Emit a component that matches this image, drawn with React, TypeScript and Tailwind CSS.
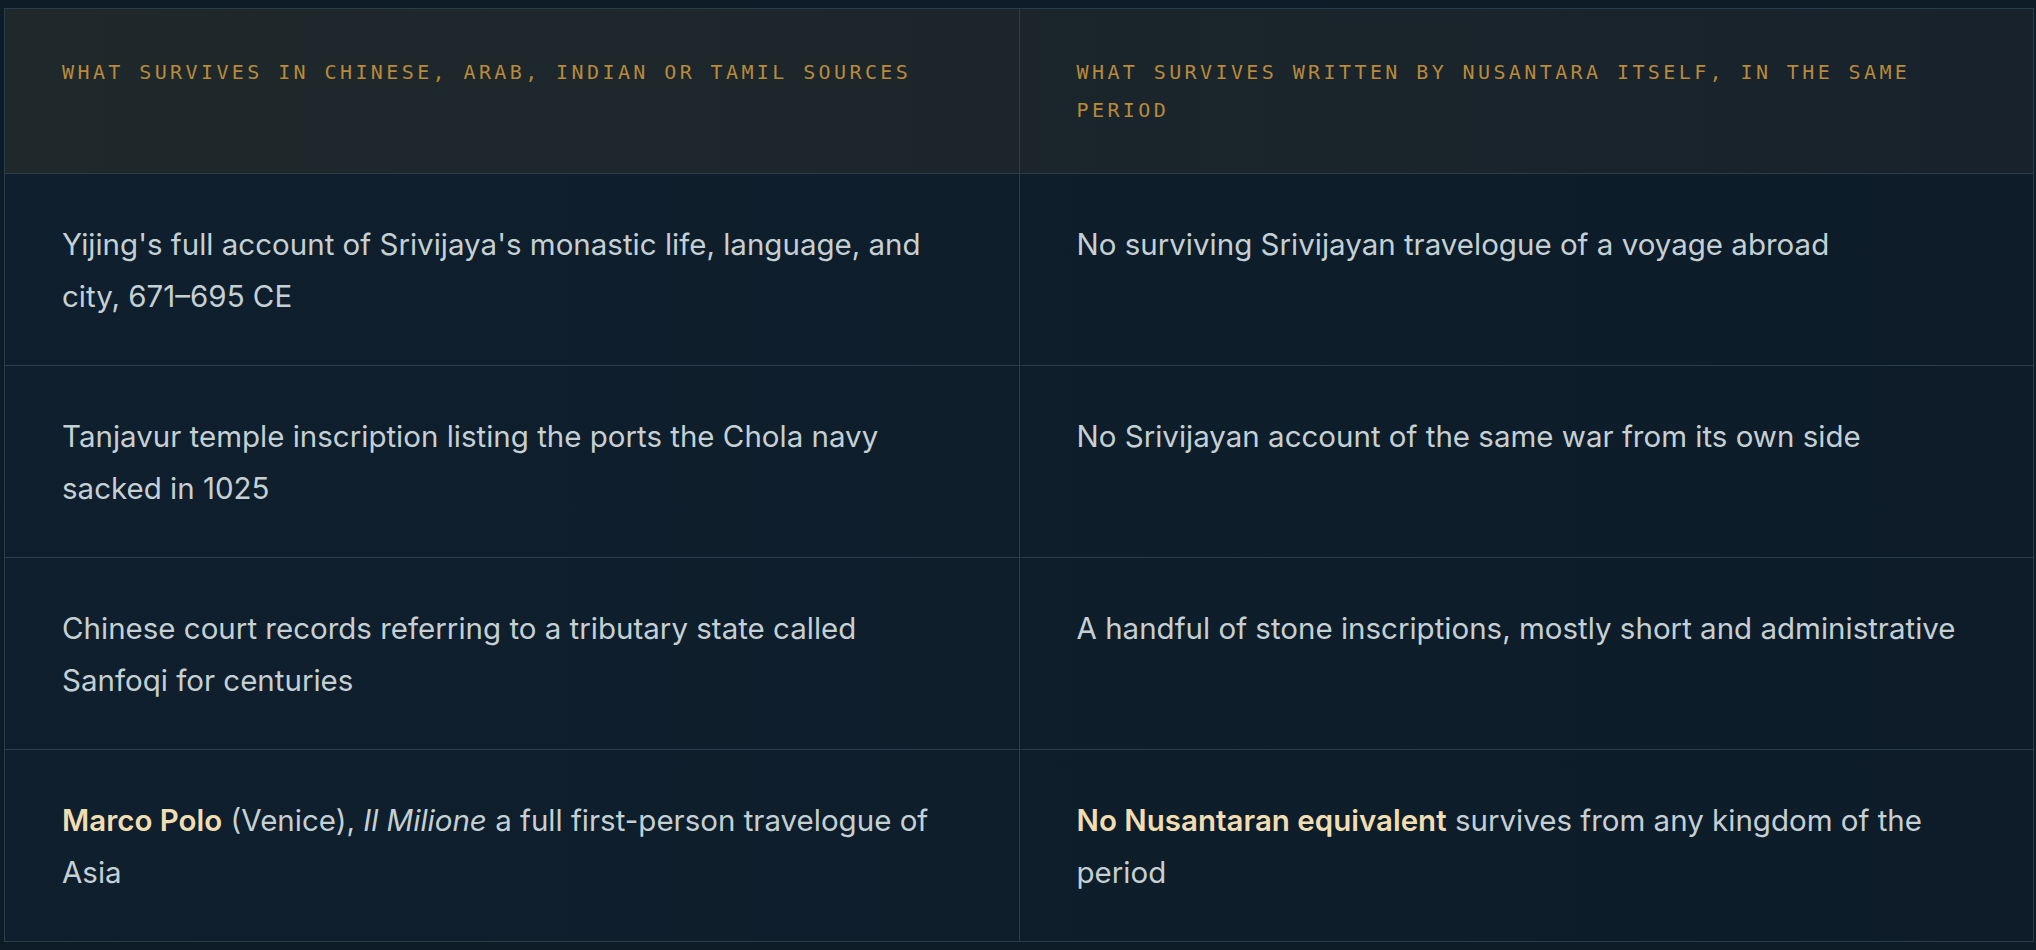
const rows: { left: React.ReactNode; right: React.ReactNode }[] = [
  {
    left: "Yijing's full account of Srivijaya's monastic life, language, and city, 671–695 CE",
    right: 'No surviving Srivijayan travelogue of a voyage abroad',
  },
  {
    left: 'Tanjavur temple inscription listing the ports the Chola navy sacked in 1025',
    right: 'No Srivijayan account of the same war from its own side',
  },
  {
    left: 'Chinese court records referring to a tributary state called Sanfoqi for centuries',
    right: 'A handful of stone inscriptions, mostly short and administrative',
  },
  {
    left: (
      <>
        <strong className="font-semibold text-[#f1ddb2]">Marco Polo</strong> (Venice), <em>Il Milione</em> a full
        first-person travelogue of Asia
      </>
    ),
    right: (
      <>
        <strong className="font-semibold text-[#f1ddb2]">No Nusantaran equivalent</strong> survives from any kingdom of
        the period
      </>
    ),
  },
];

const mono = "font-['DejaVu_Sans_Mono','Liberation_Mono',monospace]";

export default function App() {
  return (
    <div className="min-h-screen bg-[#0e1c27] pl-[4px] pr-[2px] pt-[8px]">
      <table className="w-full table-fixed border-collapse border border-[#2b3c4a] font-['Inter','Noto_Sans',sans-serif]">
        <thead>
          <tr className="bg-gradient-to-r from-[#1f292b] to-[#17222c]">
            <th className={`border border-[#2b3c4a] px-[57px] py-[44px] text-left align-top text-[20px] leading-[38px] font-normal uppercase tracking-[0.17em] text-[#b98a3a] ${mono}`}>
              What survives in Chinese, Arab, Indian or Tamil sources
            </th>
            <th className={`border border-[#2b3c4a] px-[57px] py-[44px] text-left align-top text-[20px] leading-[38px] font-normal uppercase tracking-[0.17em] text-[#b98a3a] ${mono}`}>
              What survives written by Nusantara itself, in the same period
            </th>
          </tr>
        </thead>
        <tbody>
          {rows.map((r, i) => (
            <tr key={i} className="bg-gradient-to-r from-[#0f1f2d] to-[#0d1c28]">
              <td className="border border-[#2b3c4a] px-[57px] pt-[44px] pb-[43px] align-top text-[29.5px] leading-[52px] text-[#c5d0d5]">
                {r.left}
              </td>
              <td className="border border-[#2b3c4a] px-[57px] pt-[44px] pb-[43px] align-top text-[29.5px] leading-[52px] text-[#c5d0d5]">
                {r.right}
              </td>
            </tr>
          ))}
        </tbody>
      </table>
    </div>
  );
}
